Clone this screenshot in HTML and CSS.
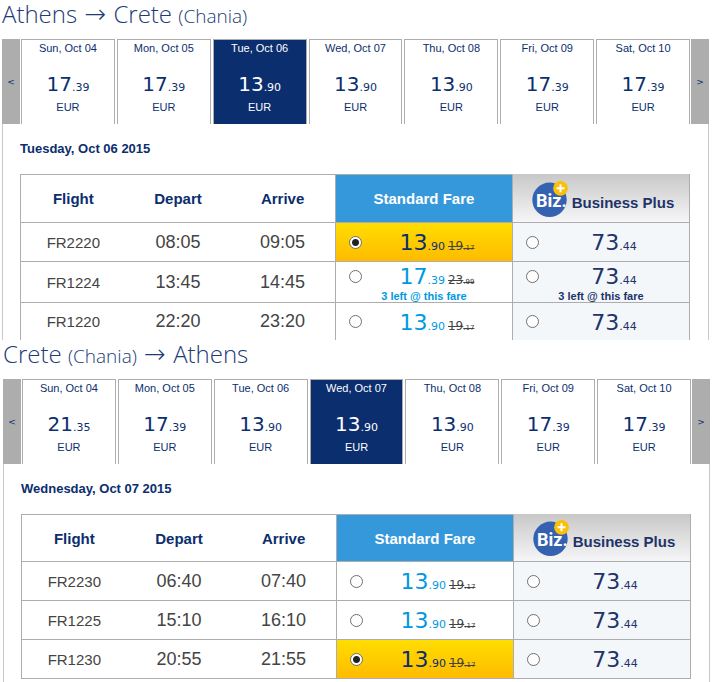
FILE: index.html
```html
<!DOCTYPE html>
<html lang="en">
<head>
<meta charset="utf-8">
<title>Select flights</title>
<link rel="stylesheet" href="styles.css">
</head>
<body>
<main>
  <section class="leg leg--out">
    <h2 class="route">Athens <span class="arrow">→</span> Crete <small>(Chania)</small></h2>
    <nav class="days" aria-label="Outbound dates">
      <button class="step" type="button">&lt;</button>
      <div class="day-list">
        <button class="day" type="button"><span class="date">Sun, Oct 04</span><span class="amount">17<small>.39</small></span><span>EUR</span></button>
        <button class="day" type="button"><span class="date">Mon, Oct 05</span><span class="amount">17<small>.39</small></span><span>EUR</span></button>
        <button class="day day--on" type="button"><span class="date">Tue, Oct 06</span><span class="amount">13<small>.90</small></span><span>EUR</span></button>
        <button class="day" type="button"><span class="date">Wed, Oct 07</span><span class="amount">13<small>.90</small></span><span>EUR</span></button>
        <button class="day" type="button"><span class="date">Thu, Oct 08</span><span class="amount">13<small>.90</small></span><span>EUR</span></button>
        <button class="day" type="button"><span class="date">Fri, Oct 09</span><span class="amount">17<small>.39</small></span><span>EUR</span></button>
        <button class="day" type="button"><span class="date">Sat, Oct 10</span><span class="amount">17<small>.39</small></span><span>EUR</span></button>
      </div>
      <button class="step" type="button">&gt;</button>
    </nav>
    <div class="panel">
      <h3 class="chosen">Tuesday, Oct 06 2015</h3>
      <table class="fares fares--open">
        <colgroup><col class="info"><col class="info"><col class="info"><col class="fare"><col class="fare"></colgroup>
        <thead>
          <tr><th>Flight</th><th>Depart</th><th>Arrive</th><th class="std">Standard Fare</th>
          <th class="plus"><div class="plus-head">
            <svg class="biz" viewBox="0 0 36 36" aria-hidden="true">
              <circle cx="17.5" cy="18.8" r="17.2" fill="#3562b0"/>
              <text x="4" y="26" class="biz-text">Biz.</text>
              <circle cx="28.5" cy="7.3" r="7.4" fill="#fabf08"/>
              <path d="M28.5 3.3v8M24.5 7.3h8" stroke="#fff" stroke-width="2" fill="none"/>
            </svg>
            <span>Business Plus</span></div></th></tr>
        </thead>
        <tbody>
          <tr><td class="no">FR2220</td><td>08:05</td><td>09:05</td>
            <td class="std"><label class="pick"><input type="radio" name="out" checked><span class="price">13<small>.90</small><s>19</s><s class="tiny">.17</s></span></label></td>
            <td class="plus"><label class="pick"><input type="radio" name="out"><span class="price">73<small>.44</small></span></label></td></tr>
          <tr><td class="no">FR1224</td><td>13:45</td><td>14:45</td>
            <td class="std"><label class="pick"><input type="radio" name="out"><span class="price">17<small>.39</small><s>23</s><s class="tiny">.99</s></span><span class="left">3 left @ this fare</span></label></td>
            <td class="plus"><label class="pick"><input type="radio" name="out"><span class="price">73<small>.44</small></span><span class="left">3 left @ this fare</span></label></td></tr>
          <tr><td class="no">FR1220</td><td>22:20</td><td>23:20</td>
            <td class="std"><label class="pick"><input type="radio" name="out"><span class="price">13<small>.90</small><s>19</s><s class="tiny">.17</s></span></label></td>
            <td class="plus"><label class="pick"><input type="radio" name="out"><span class="price">73<small>.44</small></span></label></td></tr>
        </tbody>
      </table>
    </div>
  </section>

  <section class="leg leg--back">
    <h2 class="route">Crete <small>(Chania)</small> <span class="arrow">→</span> Athens</h2>
    <nav class="days" aria-label="Return dates">
      <button class="step" type="button">&lt;</button>
      <div class="day-list">
        <button class="day" type="button"><span class="date">Sun, Oct 04</span><span class="amount">21<small>.35</small></span><span>EUR</span></button>
        <button class="day" type="button"><span class="date">Mon, Oct 05</span><span class="amount">17<small>.39</small></span><span>EUR</span></button>
        <button class="day" type="button"><span class="date">Tue, Oct 06</span><span class="amount">13<small>.90</small></span><span>EUR</span></button>
        <button class="day day--on" type="button"><span class="date">Wed, Oct 07</span><span class="amount">13<small>.90</small></span><span>EUR</span></button>
        <button class="day" type="button"><span class="date">Thu, Oct 08</span><span class="amount">13<small>.90</small></span><span>EUR</span></button>
        <button class="day" type="button"><span class="date">Fri, Oct 09</span><span class="amount">17<small>.39</small></span><span>EUR</span></button>
        <button class="day" type="button"><span class="date">Sat, Oct 10</span><span class="amount">17<small>.39</small></span><span>EUR</span></button>
      </div>
      <button class="step" type="button">&gt;</button>
    </nav>
    <div class="panel">
      <h3 class="chosen">Wednesday, Oct 07 2015</h3>
      <table class="fares fares--compact">
        <colgroup><col class="info"><col class="info"><col class="info"><col class="fare"><col class="fare"></colgroup>
        <thead>
          <tr><th>Flight</th><th>Depart</th><th>Arrive</th><th class="std">Standard Fare</th>
          <th class="plus"><div class="plus-head">
            <svg class="biz" viewBox="0 0 36 36" aria-hidden="true">
              <circle cx="17.5" cy="18.8" r="17.2" fill="#3562b0"/>
              <text x="4" y="26" class="biz-text">Biz.</text>
              <circle cx="28.5" cy="7.3" r="7.4" fill="#fabf08"/>
              <path d="M28.5 3.3v8M24.5 7.3h8" stroke="#fff" stroke-width="2" fill="none"/>
            </svg>
            <span>Business Plus</span></div></th></tr>
        </thead>
        <tbody>
          <tr><td class="no">FR2230</td><td>06:40</td><td>07:40</td>
            <td class="std"><label class="pick"><input type="radio" name="back"><span class="price">13<small>.90</small><s>19</s><s class="tiny">.17</s></span></label></td>
            <td class="plus"><label class="pick"><input type="radio" name="back"><span class="price">73<small>.44</small></span></label></td></tr>
          <tr><td class="no">FR1225</td><td>15:10</td><td>16:10</td>
            <td class="std"><label class="pick"><input type="radio" name="back"><span class="price">13<small>.90</small><s>19</s><s class="tiny">.17</s></span></label></td>
            <td class="plus"><label class="pick"><input type="radio" name="back"><span class="price">73<small>.44</small></span></label></td></tr>
          <tr><td class="no">FR1230</td><td>20:55</td><td>21:55</td>
            <td class="std"><label class="pick"><input type="radio" name="back" checked><span class="price">13<small>.90</small><s>19</s><s class="tiny">.17</s></span></label></td>
            <td class="plus"><label class="pick"><input type="radio" name="back"><span class="price">73<small>.44</small></span></label></td></tr>
        </tbody>
      </table>
    </div>
  </section>
</main>
</body>
</html>
```
FILE: styles.css
```css
:root {
  --navy: #0b2e6e;
  --ink: #213368;
  --line: #adadad;
  --edge: #c8c8c8;
}

* { box-sizing: border-box; }

body {
  margin: 0;
  background: #fff;
  color: var(--navy);
  font-family: "Liberation Sans", Arial, sans-serif;
}

button {
  margin: 0;
  padding: 0;
  border: 0;
  background: none;
  color: inherit;
  font: inherit;
  cursor: pointer;
}

.leg--out { margin: 0 5px 0 2px; }
.leg--back { margin: 0 4px 0 3px; }

.route {
  margin: 0;
  padding-bottom: 11px;
  color: #223a76;
  font: 300 24px/28px "Open Sans", "Noto Sans", sans-serif;
}
.route small { font-size: 19px; line-height: 1; }
.route .arrow {
  padding: 0 1px;
  font-family: "DejaVu Sans", sans-serif;
  font-size: 26px;
  line-height: 20px;
}

.days { display: flex; gap: 1px; }
.step {
  width: 18px;
  background: var(--line);
  font: 9px/12px "DejaVu Sans", sans-serif;
}
.day-list { display: flex; flex: 1; gap: 2px; }
.day {
  display: flex;
  flex: 1;
  flex-direction: column;
  align-items: center;
  height: 85px;
  padding-top: 2px;
  border: 1px solid var(--line);
  border-bottom: 0;
  font-size: 11px;
  line-height: 13px;
}
.day--on { background: var(--navy); color: #fff; }
.amount {
  margin: 15px 0 3px;
  font: 20px/28px "DejaVu Sans", sans-serif;
}
.amount small { font-size: 11px; line-height: 1; }

.panel {
  padding: 0 18px 0 17px;
  border: solid var(--edge);
  border-width: 0 1px;
}
.leg--back .panel { padding-bottom: 3px; }
.chosen {
  margin: 0;
  font-size: 13px;
  line-height: 50px;
}

.fares {
  width: 100%;
  table-layout: fixed;
  border-spacing: 0;
  border-right: 1px solid var(--line);
  border-left: 1px solid var(--line);
}
.info { width: calc(47% / 3); }
.fare { width: 26.5%; }
.fares th, .fares td {
  padding: 0;
  border-bottom: 1px solid var(--line);
  text-align: center;
}
.fares th {
  height: 49px;
  border-top: 1px solid var(--line);
  font-size: 15px;
}
.fares--compact th { height: 48px; }
.fares td {
  height: 39px;
  color: #444;
  font-size: 18px;
}
.fares .no { font-size: 15px; }
.fares--open tr:last-child td { height: 37px; border-bottom: 0; }
.fares .std, .fares .plus { border-left: 1px solid var(--line); }
.fares thead tr th { border-bottom: 1px solid var(--line); }

th.std { background: #3598db; color: #fff; }
.fares th.plus {
  border-top-color: #c8c8c8;
  background: linear-gradient(#c9c9c9, #f6f6f8);
  color: var(--ink);
}
.plus-head {
  display: flex;
  align-items: flex-end;
  justify-content: center;
  gap: 4px;
  padding-left: 4px;
}
.plus-head span { padding-bottom: 6px; line-height: 17px; }
.biz { width: 36px; height: 36px; }
.biz-text {
  fill: #fff;
  font: bold 18px Roboto, "Liberation Sans", sans-serif;
}

.pick {
  display: grid;
  grid-template-columns: 13px 1fr;
  align-items: center;
  padding-left: 13px;
}
.pick input {
  width: 13px;
  height: 13px;
  margin: 0;
  border: 1px solid #707070;
  border-radius: 50%;
  background: #fff;
  appearance: none;
}
.pick input:checked { background: radial-gradient(circle, #222 3px, #fff 4px); }
.price {
  padding-top: 2px;
  font: 22px/26px "DejaVu Sans", sans-serif;
}
.price small { font-size: 11px; line-height: 1; }
.price s {
  margin-left: 3px;
  color: #444;
  font-size: 12px;
  line-height: 1;
}
.price s.tiny { margin-left: 0; font-size: 7px; }
.left {
  grid-column: 1 / -1;
  margin-left: -13px;
  font-size: 11px;
  font-weight: bold;
  line-height: 12px;
}
td.std .pick { color: #0099e0; }
td.plus { background: #f3f7f9; }
td.plus .pick { color: var(--ink); }
td.std:has(input:checked) { background: linear-gradient(#ffdd00, #ffbb00); }
td.std:has(input:checked) .pick { color: var(--navy); }
```
